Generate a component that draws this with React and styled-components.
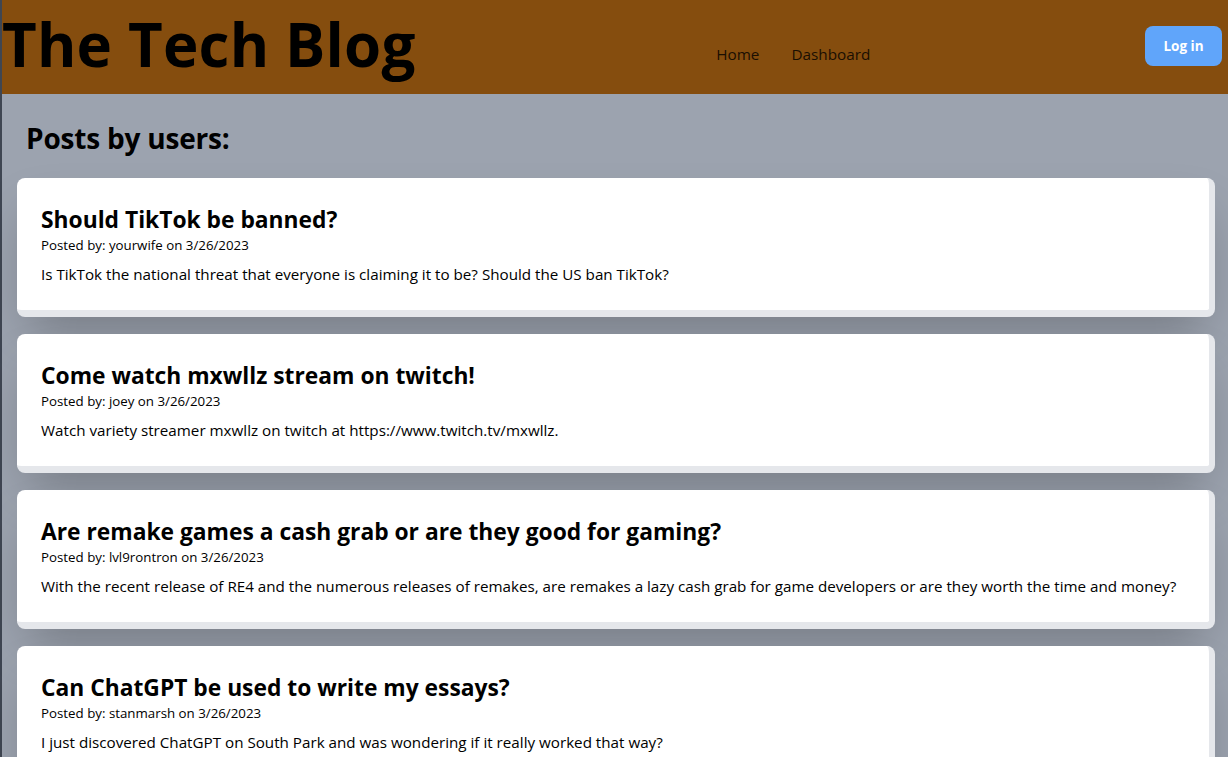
import React from 'react'
import styled, { createGlobalStyle } from 'styled-components'

const GlobalStyle = createGlobalStyle`
    * { box-sizing: border-box; }
    html, body {
        margin: 0;
        padding: 0;
        background: #9ca3af;
    }
    body {
        font-family: "Open Sans", "Noto Sans", sans-serif;
        color: #000;
    }
`

const Page = styled.div`
    min-height: 100vh;
    border-left: 2px solid #3f4652;
    background: #9ca3af;
`

const Header = styled.header`
    height: 94px;
    background: #854d0e;
    display: flex;
    align-items: center;
    justify-content: space-between;
    padding-right: 6px;
`

const Title = styled.h1`
    margin: 0;
    font-size: 60px;
    line-height: 1;
    font-weight: 700;
    letter-spacing: 0.2px;
    align-self: flex-start;
    padding-top: 14px;
`

const Nav = styled.nav`
    display: flex;
    gap: 32px;
    margin-left: 26px;
    padding-top: 14px;
`

const NavLink = styled.a`
    font-size: 15.3px;
    color: #1a0f02;
    text-decoration: none;
`

const LoginButton = styled.button`
    width: 77px;
    height: 40px;
    border: none;
    border-radius: 8px;
    background: #60a5fa;
    color: #fff;
    font-family: inherit;
    font-size: 13.5px;
    font-weight: 700;
    margin-top: -2px;
`

const Main = styled.main`
    padding: 26px 13px 0 15px;
`

const Heading = styled.h2`
    margin: 0 0 22px 9px;
    font-size: 28px;
    line-height: 36px;
    font-weight: 700;
    letter-spacing: -0.2px;
`

const PostList = styled.div`
    display: flex;
    flex-direction: column;
    gap: 17px;
`

const Card = styled.article`
    background: #fff;
    border-radius: 8px;
    border-right: 6px solid #e5e7eb;
    border-bottom: 7px solid #e5e7eb;
    padding: 26px 24px 24px;
    box-shadow: 0 25px 50px -12px rgba(0, 0, 0, 0.25);
`

const PostTitle = styled.h3`
    margin: 0;
    font-size: 22.8px;
    line-height: 32px;
    font-weight: 700;
`

const Meta = styled.p`
    margin: 0;
    font-size: 13.3px;
    line-height: 19px;
`

const Body = styled.p`
    margin: 7px 0 0;
    font-size: 15.2px;
    line-height: 24px;
`

const posts = [
    {
        title: 'Should TikTok be banned?',
        user: 'yourwife',
        body: 'Is TikTok the national threat that everyone is claiming it to be? Should the US ban TikTok?',
    },
    {
        title: 'Come watch mxwllz stream on twitch!',
        user: 'joey',
        body: 'Watch variety streamer mxwllz on twitch at https://www.twitch.tv/mxwllz.',
    },
    {
        title: 'Are remake games a cash grab or are they good for gaming?',
        user: 'lvl9rontron',
        body: 'With the recent release of RE4 and the numerous releases of remakes, are remakes a lazy cash grab for game developers or are they worth the time and money?',
    },
    {
        title: 'Can ChatGPT be used to write my essays?',
        user: 'stanmarsh',
        body: 'I just discovered ChatGPT on South Park and was wondering if it really worked that way?',
    },
]

const App = () => {
    return (
        <Page>
            <GlobalStyle />
            <Header>
                <Title>The Tech Blog</Title>
                <Nav>
                    <NavLink href="#">Home</NavLink>
                    <NavLink href="#">Dashboard</NavLink>
                </Nav>
                <LoginButton>Log in</LoginButton>
            </Header>
            <Main>
                <Heading>Posts by users:</Heading>
                <PostList>
                    {posts.map((post) => (
                        <Card key={post.title}>
                            <PostTitle>{post.title}</PostTitle>
                            <Meta>Posted by: {post.user} on 3/26/2023</Meta>
                            <Body>{post.body}</Body>
                        </Card>
                    ))}
                </PostList>
            </Main>
        </Page>
    )
}

export default App
